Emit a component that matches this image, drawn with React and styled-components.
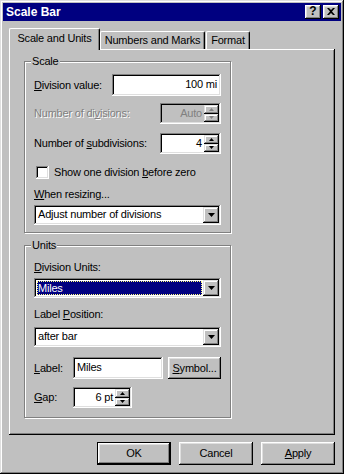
import React from "react";
import styled, { createGlobalStyle, css } from "styled-components";

const GlobalStyle = createGlobalStyle`
  body {
    margin: 0;
    background: #c0c0c0;
    font-family: "Liberation Sans", Arial, sans-serif;
    font-size: 11px;
  }
  * { box-sizing: border-box; }
`;

const raised = css`
  box-shadow: inset -1px -1px #000, inset 1px 1px #fff,
    inset -2px -2px #808080, inset 2px 2px #dfdfdf;
`;

const sunken = css`
  box-shadow: inset -1px -1px #fff, inset 1px 1px #808080,
    inset -2px -2px #dfdfdf, inset 2px 2px #000;
`;

const Window = styled.div`
  width: 344px;
  height: 474px;
  padding: 3px;
  background: #c0c0c0;
  box-shadow: inset -1px -1px #000, inset 1px 1px #dfdfdf,
    inset -2px -2px #808080, inset 2px 2px #fff;
  display: flex;
  flex-direction: column;
  color: #000;
  line-height: 13px;
  letter-spacing: -0.2px;
`;

const TitleBar = styled.div`
  height: 18px;
  background: #000080;
  color: #fff;
  font-weight: bold;
  font-size: 12px;
  letter-spacing: 0;
  display: flex;
  align-items: center;
  justify-content: space-between;
  padding: 0 2px 0 3px;
`;

const TitleButtons = styled.div`
  display: flex;
  gap: 2px;
`;

const TitleButton = styled.div`
  width: 16px;
  height: 14px;
  background: #c0c0c0;
  ${raised};
  color: #000;
  font-size: 12px;
  font-weight: bold;
  display: flex;
  align-items: center;
  justify-content: center;
  padding-bottom: 1px;
`;

const Body = styled.div`
  padding: 7px 6px 0 6px;
  display: flex;
  flex-direction: column;
`;

const TabRow = styled.div`
  height: 21px;
  display: flex;
  align-items: flex-end;
`;

const Tab = styled.div`
  width: ${(p) => p.$w}px;
  height: ${(p) => (p.$active ? 22 : 18)}px;
  margin-bottom: ${(p) => (p.$active ? -1 : 0)}px;
  margin-left: ${(p) => p.$ml || 0}px;
  background: #c0c0c0;
  border-top: 1px solid #fff;
  border-left: 1px solid #fff;
  border-right: 1px solid #000;
  border-radius: 2px 2px 0 0;
  box-shadow: inset -1px 0 #808080;
  position: relative;
  z-index: ${(p) => (p.$active ? 2 : 1)};
  display: flex;
  justify-content: center;
  padding-top: ${(p) => (p.$active ? 3 : 2)}px;
`;

const Panel = styled.div`
  height: 386px;
  background: #c0c0c0;
  box-shadow: inset -1px -1px #000, inset 1px 1px #fff, inset -2px -2px #808080;
  padding: 6px 0 0 15px;
  display: flex;
  flex-direction: column;
`;

const Group = styled.fieldset`
  width: 207px;
  margin: ${(p) => p.$mt || 0}px 0 0 0;
  padding: 0 9px ${(p) => p.$pb}px 9px;
  border: 1px solid #808080;
  box-shadow: inset 1px 1px #fff, 1px 1px #fff;
  min-inline-size: 0;
  display: flex;
  flex-direction: column;
`;

const Legend = styled.legend`
  margin-left: -3px;
  padding: 0 1px;
  line-height: 13px;
  background: #c0c0c0;
`;

const Row = styled.div`
  display: flex;
  align-items: center;
  justify-content: ${(p) => p.$justify || "space-between"};
  gap: ${(p) => p.$gap || 0}px;
  height: ${(p) => p.$h}px;
  margin-top: ${(p) => p.$mt}px;
`;

const Label = styled.span`
  width: ${(p) => (p.$w ? `${p.$w}px` : "auto")};
  flex-shrink: 0;
  color: ${(p) => (p.$disabled ? "#808080" : "#000")};
  text-shadow: ${(p) => (p.$disabled ? "1px 1px #fff" : "none")};
  white-space: nowrap;
`;

const Key = styled.span`
  text-decoration: underline;
  text-underline-offset: 1px;
`;

const Field = styled.div`
  ${sunken};
  width: ${(p) => (p.$w ? `${p.$w}px` : "100%")};
  height: ${(p) => p.$h}px;
  background: ${(p) => (p.$disabled ? "#c0c0c0" : "#fff")};
  padding: 2px;
  display: flex;
  align-items: stretch;
  flex-shrink: 0;
`;

const FieldText = styled.span`
  flex: 1;
  display: flex;
  align-items: center;
  justify-content: ${(p) => (p.$right ? "flex-end" : "flex-start")};
  padding: 0 ${(p) => (p.$right ? 2 : 1)}px 0 ${(p) => (p.$right ? 0 : 2)}px;
  color: ${(p) => (p.$disabled ? "#808080" : "#000")};
  margin-top: -1px;
`;

const Selected = styled.span`
  flex: 1;
  display: flex;
  align-items: center;
  margin: 1px;
  padding-left: 1px;
  background: #000080;
  color: #fff;
  outline: 1px dotted #ffff80;
  outline-offset: -1px;
`;

const SpinCol = styled.div`
  width: 15px;
  display: flex;
  flex-direction: column;
`;

const SmallButton = styled.div`
  flex: 1;
  background: #c0c0c0;
  box-shadow: inset -1px -1px #000, inset 1px 1px #dfdfdf,
    inset -2px -2px #808080, inset 2px 2px #fff;
  display: flex;
  align-items: center;
  justify-content: center;
`;

const DropButton = styled.div`
  width: 16px;
  background: #c0c0c0;
  box-shadow: inset -1px -1px #000, inset 1px 1px #dfdfdf,
    inset -2px -2px #808080, inset 2px 2px #fff;
  display: flex;
  align-items: center;
  justify-content: center;
`;

const Check = styled.div`
  width: 13px;
  height: 13px;
  background: #fff;
  ${sunken};
  margin-left: 2px;
  flex-shrink: 0;
`;

const PushButton = styled.div`
  width: ${(p) => p.$w}px;
  height: ${(p) => p.$h || 23}px;
  margin-left: ${(p) => p.$ml || "0"};
  background: #c0c0c0;
  ${(p) =>
    p.$default
      ? css`
          box-shadow: inset 0 0 0 1px #000, inset -2px -2px #000,
            inset 2px 2px #fff, inset -3px -3px #808080, inset 3px 3px #dfdfdf;
        `
      : raised};
  display: flex;
  align-items: center;
  justify-content: center;
  flex-shrink: 0;
`;

const ButtonRow = styled.div`
  display: flex;
  justify-content: flex-end;
  gap: 8px;
  margin-top: 7px;
`;

const Arrow = ({ up, disabled, big }) => {
  const fill = disabled ? "#808080" : "#000";
  if (big) {
    return (
      <svg width="7" height="4" viewBox="0 0 7 4">
        <path d="M0 0h7L3.5 4z" fill={fill} />
      </svg>
    );
  }
  return (
    <svg width="5" height="3" viewBox="0 0 5 3">
      <path d={up ? "M2.5 0L5 3H0z" : "M0 0h5L2.5 3z"} fill={fill} />
    </svg>
  );
};

const Spinner = ({ value, width, disabled }) => (
  <Field $w={width} $h={21} $disabled={disabled}>
    <FieldText $right $disabled={disabled}>{value}</FieldText>
    <SpinCol>
      <SmallButton><Arrow up disabled={disabled} /></SmallButton>
      <SmallButton><Arrow disabled={disabled} /></SmallButton>
    </SpinCol>
  </Field>
);

const Dropdown = ({ value, selected }) => (
  <Field $h={20}>
    {selected ? <Selected>{value}</Selected> : <FieldText>{value}</FieldText>}
    <DropButton><Arrow big /></DropButton>
  </Field>
);

export default function App() {
  return (
    <>
      <GlobalStyle />
      <Window>
        <TitleBar>
          <span>Scale Bar</span>
          <TitleButtons>
            <TitleButton>?</TitleButton>
            <TitleButton>
              <svg width="8" height="7" viewBox="0 0 8 7">
                <path d="M0 0h2l2 2 2-2h2L5 3.5 8 7H6L4 5 2 7H0l3-3.5z" fill="#000" />
              </svg>
            </TitleButton>
          </TitleButtons>
        </TitleBar>

        <Body>
          <TabRow>
            <Tab $active $w={91}>Scale and Units</Tab>
            <Tab $w={105}>Numbers and Marks</Tab>
            <Tab $w={44} $ml={1}>Format</Tab>
          </TabRow>

          <Panel>
            <Group $pb={7}>
              <Legend>Scale</Legend>
              <Row $h={22} $mt={6}>
                <Label><Key>D</Key>ivision value:</Label>
                <Field $w={109} $h={22}>
                  <FieldText $right>100 mi</FieldText>
                </Field>
              </Row>
              <Row $h={21} $mt={7}>
                <Label $disabled>Number of di<Key>v</Key>isions:</Label>
                <Spinner value="Auto" width={61} disabled />
              </Row>
              <Row $h={21} $mt={9}>
                <Label>Number of <Key>s</Key>ubdivisions:</Label>
                <Spinner value="4" width={61} />
              </Row>
              <Row $h={13} $mt={12} $justify="flex-start" $gap={5}>
                <Check />
                <Label>Show one division <Key>b</Key>efore zero</Label>
              </Row>
              <Row $h={13} $mt={9} $justify="flex-start">
                <Label><Key>W</Key>hen resizing...</Label>
              </Row>
              <Row $h={20} $mt={4}>
                <Dropdown value="Adjust number of divisions" />
              </Row>
            </Group>

            <Group $pb={9} $mt={6}>
              <Legend>Units</Legend>
              <Row $h={13} $mt={9} $justify="flex-start">
                <Label><Key>D</Key>ivision Units:</Label>
              </Row>
              <Row $h={20} $mt={4}>
                <Dropdown value="Miles" selected />
              </Row>
              <Row $h={13} $mt={10} $justify="flex-start">
                <Label>Label <Key>P</Key>osition:</Label>
              </Row>
              <Row $h={20} $mt={6}>
                <Dropdown value="after bar" />
              </Row>
              <Row $h={22} $mt={10} $justify="flex-start">
                <Label $w={39}><Key>L</Key>abel:</Label>
                <Field $w={90} $h={22}>
                  <FieldText>Miles</FieldText>
                </Field>
                <PushButton $w={53} $h={22} $ml="auto">
                  <span><Key>S</Key>ymbol...</span>
                </PushButton>
              </Row>
              <Row $h={21} $mt={8} $justify="flex-start">
                <Label $w={39}><Key>G</Key>ap:</Label>
                <Spinner value="6 pt" width={59} />
              </Row>
            </Group>
          </Panel>

          <ButtonRow>
            <PushButton $w={74} $default>OK</PushButton>
            <PushButton $w={74}>Cancel</PushButton>
            <PushButton $w={74}><span><Key>A</Key>pply</span></PushButton>
          </ButtonRow>
        </Body>
      </Window>
    </>
  );
}
